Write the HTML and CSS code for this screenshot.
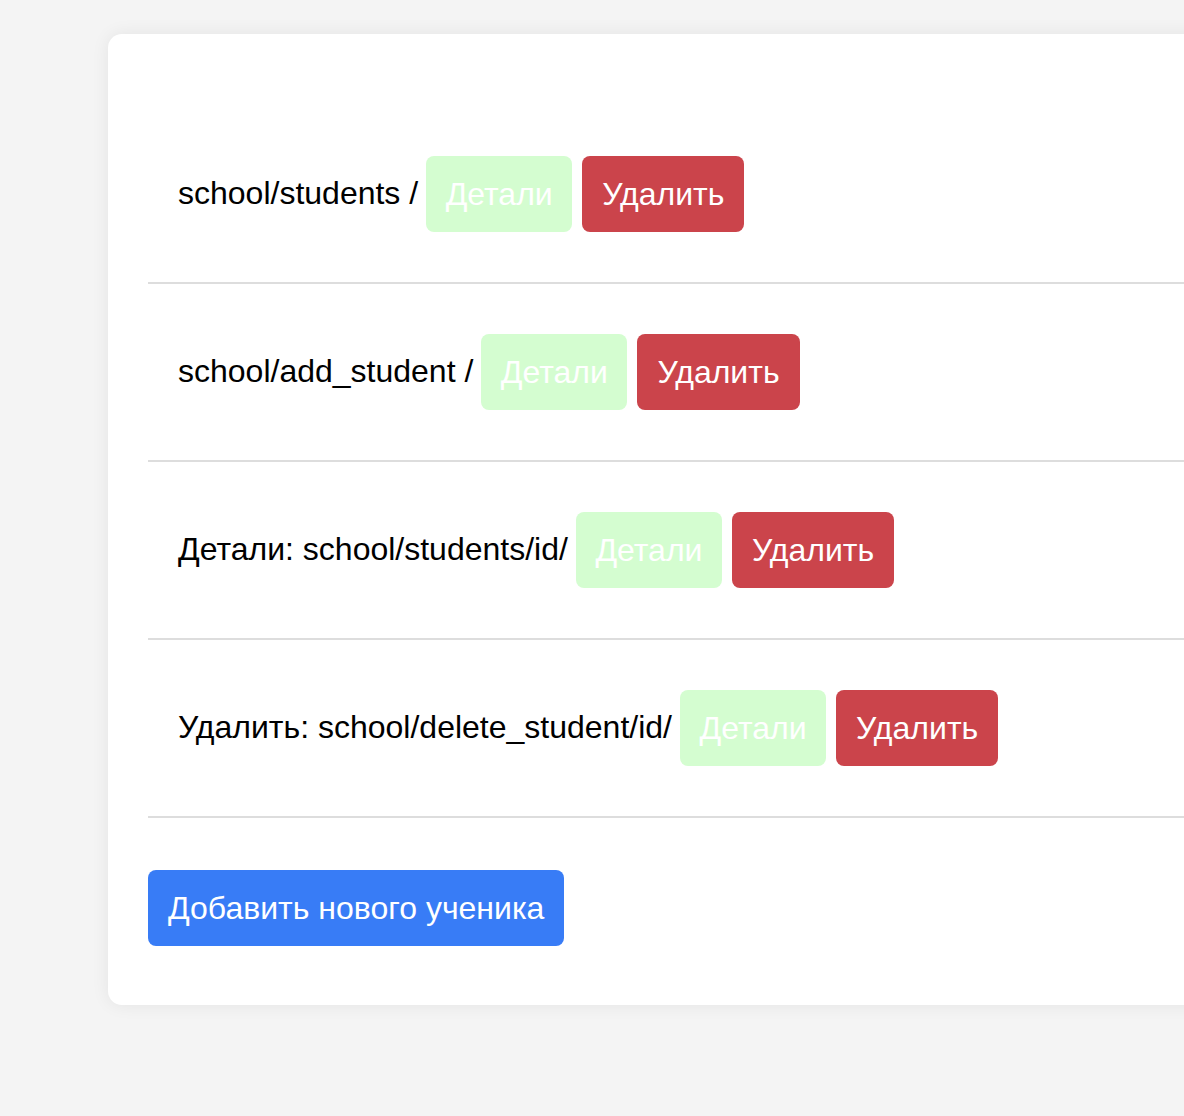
FILE: index.html
```html
<!DOCTYPE html>
<html lang="ru">
<head>
<meta charset="utf-8">
<title>School</title>
<link rel="stylesheet" href="styles.css">
</head>
<body>
<div class="card">
  <ul class="routes">
    <li class="route"><span class="route-text">school/students /</span><a class="btn btn-details">Детали</a><a class="btn btn-delete">Удалить</a></li>
    <li class="route"><span class="route-text">school/add_student /</span><a class="btn btn-details">Детали</a><a class="btn btn-delete">Удалить</a></li>
    <li class="route"><span class="route-text">Детали: school/students/id/</span><a class="btn btn-details">Детали</a><a class="btn btn-delete">Удалить</a></li>
    <li class="route"><span class="route-text">Удалить: school/delete_student/id/</span><a class="btn btn-details">Детали</a><a class="btn btn-delete">Удалить</a></li>
  </ul>
  <a class="btn btn-add">Добавить нового ученика</a>
</div>
</body>
</html>
```
FILE: styles.css
```css
html, body {
  margin: 0;
  padding: 0;
}
body {
  background: #f4f4f4;
  font-family: "Liberation Sans", Arial, Helvetica, sans-serif;
  font-size: 32px;
  color: #000;
  overflow: hidden;
  height: 1116px;
}
.card {
  margin: 34px 0 0 108px;
  width: 1200px;
  background: #fff;
  border-radius: 14px;
  box-shadow: 0 0 18px rgba(0, 0, 0, 0.07);
  padding: 40px 40px 59px 40px;
  box-sizing: border-box;
}
.routes {
  list-style: none;
  margin: 32px 0 32px 0;
  padding: 0;
}
.route {
  display: flex;
  align-items: center;
  gap: 10px;
  padding: 50px 30px;
  border-bottom: 2px solid #dddddd;
}
.route-text {
  margin-right: -2px;
  margin-top: -2px;
}
.btn {
  display: inline-block;
  padding: 20px 20px;
  border-radius: 8px;
  color: #fff;
  line-height: 36px;
  text-decoration: none;
}
.btn-details {
  background: #d4fdd0;
  padding: 20px 19.5px;
}
.btn-delete {
  background: #cb444b;
}
.btn-add {
  background: #387cf6;
  margin-top: 20px;
}
```
